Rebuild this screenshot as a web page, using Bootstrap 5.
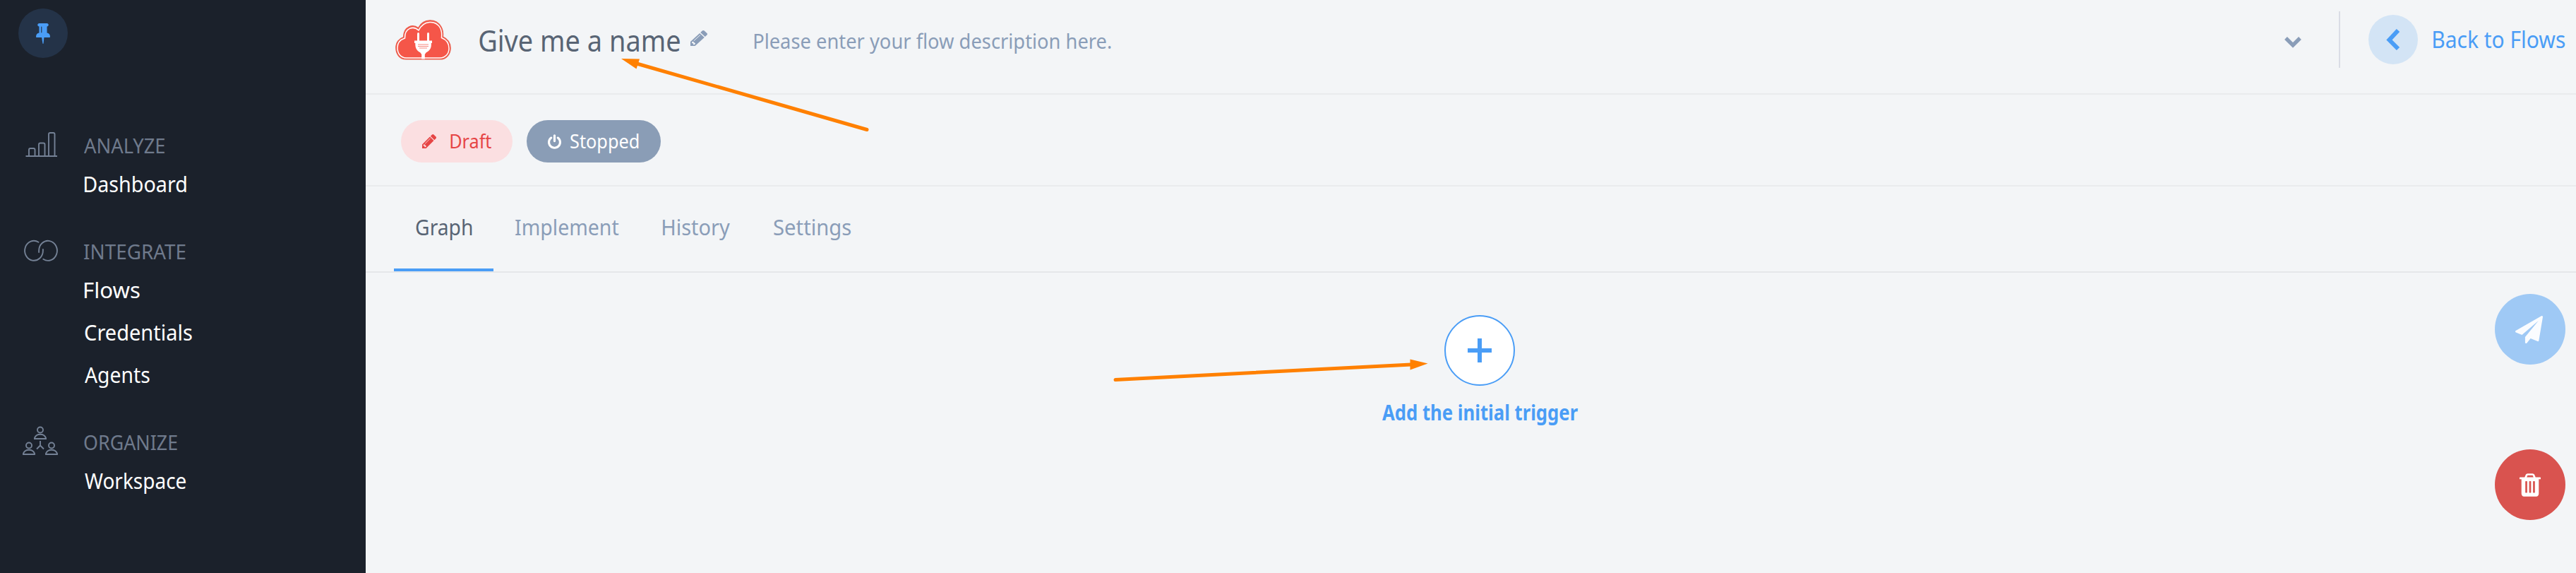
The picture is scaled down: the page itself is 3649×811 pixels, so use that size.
<!DOCTYPE html>
<html lang="en">
<head>
<meta charset="utf-8">
<title>Flow designer</title>
<link href="https://cdn.jsdelivr.net/npm/bootstrap@5.3.0/dist/css/bootstrap.min.css" rel="stylesheet">
<style>
  body { font-family: "Noto Sans", sans-serif; background: #f3f5f7; height: 811px; overflow: hidden; color: #55606e; }
  svg { display: block; flex: none; }
  a { text-decoration: none; color: inherit; }
  .fit { display: block; white-space: nowrap; flex: none; transform-origin: 0 50%; }
  .sidebar { width: 518px; background: #1b212b; flex: none; }
  .pin { width: 70px; height: 70px; margin: 12px 0 100px 26px; background: #243348; color: #4a9df6; }
  .menu-group { margin-bottom: 42px; }
  .menu-head { height: 48px; line-height: 48px; font-size: 29px; color: #6f7a8c; position: relative; padding-left: 118.5px; }
  .menu-head svg { position: absolute; left: 28px; top: -3px; fill: none; stroke: #748195; stroke-width: 1.9; }
  .menu-link { display: block; height: 60px; line-height: 60px; font-size: 31px; color: #fff; padding-left: 119.5px; }
  .flow-header { height: 134px; border-bottom: 2px solid #e9ebed; padding-left: 42px; }
  .status-bar { height: 130px; border-bottom: 2px solid #e9ebed; padding: 4px 0 0 50px; gap: 20px; }
  .tab-bar { height: 122px; border-bottom: 2px solid #e5e7ea; padding-left: 40px; gap: 1px; }
  .logo { margin-top: 27px; }
  .title { font-size: 41px; line-height: 60px; margin: 27px 0 0 40px; color: #586474; }
  .edit { margin: 43px 0 0 14px; color: #8a9db8; }
  .desc { font-size: 29.5px; line-height: 60px; margin: 28px 0 0 66px; color: #8a9db8; }
  .toggle { margin-top: 51px; }
  .rule-v { width: 2px; height: 80px; background: #dadde5; margin: 16px 40px 0 53px; }
  .back-round { width: 70px; height: 70px; background: #d3e4f5; margin-top: 21px; }
  .back-text { font-size: 32px; line-height: 60px; margin: 26px 16px 0 22px; }
  .blue { color: #4a9df6; }
  .pill { height: 60px; border-radius: 30px; font-size: 27.5px; line-height: 60px; }
  .pill-draft { width: 158px; padding-left: 29.5px; gap: 20px; background: #fbdfe1; color: #e64545; }
  .pill-stopped { width: 190px; padding-left: 30px; gap: 13px; background: #8a9db6; color: #fff; }
  .tab { height: 120px; line-height: 115px; font-size: 31px; padding: 0 30.5px; color: #8a9db8; }
  .tab.current { color: #586474; border-bottom: 4px solid #4a9df6; }
  .canvas { padding: 60px 0 0 25px; }
  .node { width: 100px; height: 100px; border: 2px solid #4a9df6; background: #fff; }
  .node-text { font-size: 29.5px; line-height: 60px; font-weight: 700; margin-top: 8px; }
  .fabs { position: absolute; right: 15px; top: 30px; gap: 120px; }
  .fab { width: 100px; height: 100px; color: #fff; }
  .fab-send { background: #9fc9f5; color: #fafcff; }
  .fab-trash { background: #d9534f; }
  .pointers { position: absolute; left: 0; top: 0; pointer-events: none; }
</style>
</head>
<body class="d-flex position-relative">

<aside class="sidebar h-100">
  <div class="pin rounded-circle d-flex align-items-center justify-content-center">
    <svg width="20" height="29" viewBox="320 128 1152 1664" fill="currentColor"><path d="M800 864v-448q0-14-9-23t-23-9-23 9-9 23v448q0 14 9 23t23 9 23-9 9-23zm672 352q0 26-19 45t-45 19h-429l-51 483q-2 12-10.500 20.500t-20.500 8.500h-1q-27 0-32-27l-76-485h-404q-26 0-45-19t-19-45q0-123 78.500-221.500t177.500-98.500v-512q-52 0-90-38t-38-90 38-90 90-38h640q52 0 90 38t38 90-38 90-90 38v512q99 0 177.500 98.500t78.500 221.500z"/></svg>
  </div>
  <nav>
    <div class="menu-group">
      <div class="menu-head">
        <svg width="58" height="50" viewBox="28 179 58 50"><path d="M36.500 221H81" stroke-width="2.200"/><path d="M41 220v-8q0-2 2-2h4.500q2 0 2 2v8M55 220v-15.500q0-2 2-2h4.500q2 0 2 2V220M69 220v-30q0-2 2-2h4.500q2 0 2 2v30"/></svg>
        <span class="fit" data-w="114.500">ANALYZE</span>
      </div>
      <a href="#" class="menu-link"><span class="fit" data-w="144">Dashboard</span></a>
    </div>
    <div class="menu-group">
      <div class="menu-head">
        <svg width="58" height="50" viewBox="28 329 58 50" stroke-width="2.400" stroke-linecap="round"><path d="M54.500 342.700A12.900 14 0 1 0 60.900 354.800V353"/><path d="M55.100 357V354.800A12.900 14 0 1 1 61.300 366.800"/></svg>
        <span class="fit" data-w="144">INTEGRATE</span>
      </div>
      <a href="#" class="menu-link"><span class="fit" data-w="78">Flows</span></a>
      <a href="#" class="menu-link"><span class="fit" data-w="152">Credentials</span></a>
      <a href="#" class="menu-link"><span class="fit" data-w="92">Agents</span></a>
    </div>
    <div class="menu-group">
      <div class="menu-head">
        <svg width="58" height="50" viewBox="28 599 58 50"><g id="person"><circle cx="57" cy="608.500" r="4"/><path d="M49 621v-1.200Q51 614.800 57 614.800T65 619.800V621z"/></g><use href="#person" x="-16" y="22"/><use href="#person" x="16" y="22"/><path d="M57 624v6.500L52 635.500M57 630.500L62 635.500"/></svg>
        <span class="fit" data-w="132">ORGANIZE</span>
      </div>
      <a href="#" class="menu-link"><span class="fit" data-w="143">Workspace</span></a>
    </div>
  </nav>
</aside>

<main class="flex-grow-1 d-flex flex-column">
  <header class="flow-header d-flex align-items-start">
    <svg class="logo" width="79" height="59" viewBox="0 0 79 59">
      <path d="M15 57C5 57 .8 48 .8 40.500C.8 33 5.500 27.500 11.500 25.500C11.500 10 25 6.500 32.500 12.500C40 -2 58 -1 65 11C67.500 15.500 68 20 67.500 25C74 28 78.200 33.500 78.200 41C78.200 49 73 57 63 57Z" fill="#f55649" stroke="#e8604f" stroke-width="1.200"/>
      <path d="M15.500 55C7 55 3 48 3 40.500C3 33.500 7.500 29 13.500 27C13.200 12.500 25.500 9 33 16C40 1.500 57 1 63.500 12.500C66 17 66 21.500 65.500 26.500C72 29 76 34.500 76 41.500C76 49 71 55 63 55Z" fill="none" stroke="#fff" stroke-width="1.500"/>
      <path d="M31 31V21q0-2 1.500-2T34 21v10zM45 31V21q0-2 1.500-2T48 21v10zM27 30.500H52V34H50.800C51.500 42 48 45 43.500 47.500L41.800 50V56.500H37.200V50L35.500 47.500C31 45 28 42 28.300 34H27z" fill="#fff"/>
      <path d="M32 36h15M32 38.500h15M34 41h11" stroke="#f6897f" stroke-width="1"/>
    </svg>
    <h1 class="title mb-0 fw-normal"><span class="fit" data-w="284.500">Give me a name</span></h1>
    <svg class="edit" width="24" height="22" viewBox="128 149 1515 1515" preserveAspectRatio="none" fill="currentColor"><path id="pencil" d="M491 1536l91-91-235-235-91 91v107h128v128h107zm523-928q0-22-22-22-10 0-17 7l-542 542q-7 7-7 17 0 22 22 22 10 0 17-7l542-542q7-7 7-17zm-54-192l416 416-832 832h-416v-416zm683 96q0 53-37 90l-166 166-416-416 166-165q36-38 90-38 53 0 91 38l235 234q37 39 37 91z"/></svg>
    <p class="desc mb-0"><span class="fit" data-w="505.500">Please enter your flow description here.</span></p>
    <svg class="toggle ms-auto" width="24" height="17" viewBox="0 0 24 17"><path d="M2 3L12 13L22 3" fill="none" stroke="#8a9db8" stroke-width="5.400"/></svg>
    <div class="rule-v"></div>
    <a href="#" class="blue d-flex">
      <span class="back-round rounded-circle d-flex align-items-center justify-content-center"><svg width="24" height="30" viewBox="0 0 24 30"><path d="M19 2L6.500 15.500L19 28" fill="none" stroke="#4a9df6" stroke-width="6"/></svg></span>
      <span class="back-text"><span class="fit" data-w="186">Back to Flows</span></span>
    </a>
  </header>

  <section class="status-bar d-flex align-items-center">
    <span class="pill pill-draft d-flex align-items-center"><svg width="20" height="20" viewBox="128 149 1515 1515" fill="currentColor"><use href="#pencil"/></svg><span class="fit" data-w="58.500">Draft</span></span>
    <span class="pill pill-stopped d-flex align-items-center"><svg width="19" height="21" viewBox="128 0 1536 1664" fill="currentColor"><path d="M1664 896q0 156-61 298t-164 245-245 164-298 61-298-61-245-164-164-245-61-298q0-182 80.500-343t226.500-270q43-32 95.500-25t83.500 50q32 42 24.500 94.500t-49.500 84.500q-98 74-151.500 181t-53.500 228q0 104 40.500 198.500t109.500 163.500 163.500 109.500 198.500 40.500 198.500-40.500 163.500-109.500 109.500-163.500 40.500-198.500q0-121-53.500-228t-151.500-181q-42-32-49.500-84.500t24.500-94.500q31-43 84-50t95 25q146 109 226.500 270t80.500 343zm-640-768v640q0 52-38 90t-90 38-90-38-38-90v-640q0-52 38-90t90-38 90 38 38 90z"/></svg><span class="fit" data-w="96.500">Stopped</span></span>
  </section>

  <nav class="tab-bar d-flex">
    <a href="#" class="tab current"><span class="fit" data-w="79.500">Graph</span></a>
    <a href="#" class="tab"><span class="fit" data-w="146.500">Implement</span></a>
    <a href="#" class="tab"><span class="fit" data-w="95">History</span></a>
    <a href="#" class="tab"><span class="fit" data-w="109.500">Settings</span></a>
  </nav>

  <section class="canvas flex-grow-1 position-relative d-flex flex-column align-items-center">
    <div class="node rounded-circle d-flex align-items-center justify-content-center">
      <svg width="34" height="34" viewBox="0 0 34 34"><path d="M17 0V34M0 17H34" stroke="#4a9df6" stroke-width="6"/></svg>
    </div>
    <div class="node-text blue"><span class="fit" data-w="277">Add the initial trigger</span></div>
    <div class="fabs d-flex flex-column">
      <a href="#" class="fab fab-send rounded-circle d-flex align-items-center justify-content-center"><svg class="me-1" width="39" height="39" viewBox="0 0 1792 1792" fill="currentColor"><path d="M1764 11q33 24 27 64l-256 1536q-5 29-32 45-14 8-31 8-11 0-24-5l-453-185-242 295q-18 23-49 23-13 0-22-4-19-7-30.500-23.500t-11.500-36.500v-349l864-1059-1069 925-395-162q-37-14-40-55-2-40 32-59l1664-960q15-9 32-9 20 0 36 11z"/></svg></a>
      <a href="#" class="fab fab-trash rounded-circle d-flex align-items-center justify-content-center"><svg width="30" height="33" viewBox="192 128 1408 1536" fill="currentColor"><path d="M704 1376v-704q0-14-9-23t-23-9h-64q-14 0-23 9t-9 23v704q0 14 9 23t23 9h64q14 0 23-9t9-23zm256 0v-704q0-14-9-23t-23-9h-64q-14 0-23 9t-9 23v704q0 14 9 23t23 9h64q14 0 23-9t9-23zm256 0v-704q0-14-9-23t-23-9h-64q-14 0-23 9t-9 23v704q0 14 9 23t23 9h64q14 0 23-9t9-23zm-544-992h448l-48-117q-7-9-17-11h-317q-10 2-17 11zm928 32v64q0 14-9 23t-23 9h-96v948q0 83-47 143.500t-113 60.500h-832q-66 0-113-58.500t-47-141.500v-952h-96q-14 0-23-9t-9-23v-64q0-14 9-23t23-9h309l70-167q15-37 54-63t79-26h320q40 0 79 26t54 63l70 167h309q14 0 23 9t9 23z"/></svg></a>
    </div>
  </section>
</main>

<!-- Hint arrows drawn over the page -->
<svg class="pointers" width="3649" height="811" viewBox="0 0 3649 811" fill="#ff8000" stroke="#ff8000">
  <path d="M1228 183.500L902 90M1580 537.500L1999 516" stroke-width="5" stroke-linecap="round"/>
  <path d="M880 83L906 83.500L901.500 97.500ZM2022.500 514.500L1997.500 508.500V523.500Z" stroke="none"/>
</svg>

<script src="https://cdn.jsdelivr.net/npm/bootstrap@5.3.0/dist/js/bootstrap.bundle.min.js"></script>
<script>
  // Condense each label so that its glyphs fill exactly data-w pixels.
  const ctx = document.createElement('canvas').getContext('2d');
  document.querySelectorAll('.fit').forEach(el => {
    const s = getComputedStyle(el), w = +el.dataset.w;
    ctx.font = `${s.fontWeight} ${s.fontSize} "Noto Sans"`;
    const m = ctx.measureText(el.textContent);
    const k = w / (m.actualBoundingBoxRight + m.actualBoundingBoxLeft);
    el.style.width = w + 'px';
    el.style.transform = `translateX(${m.actualBoundingBoxLeft * k}px) scaleX(${k})`;
  });
</script>
</body>
</html>
